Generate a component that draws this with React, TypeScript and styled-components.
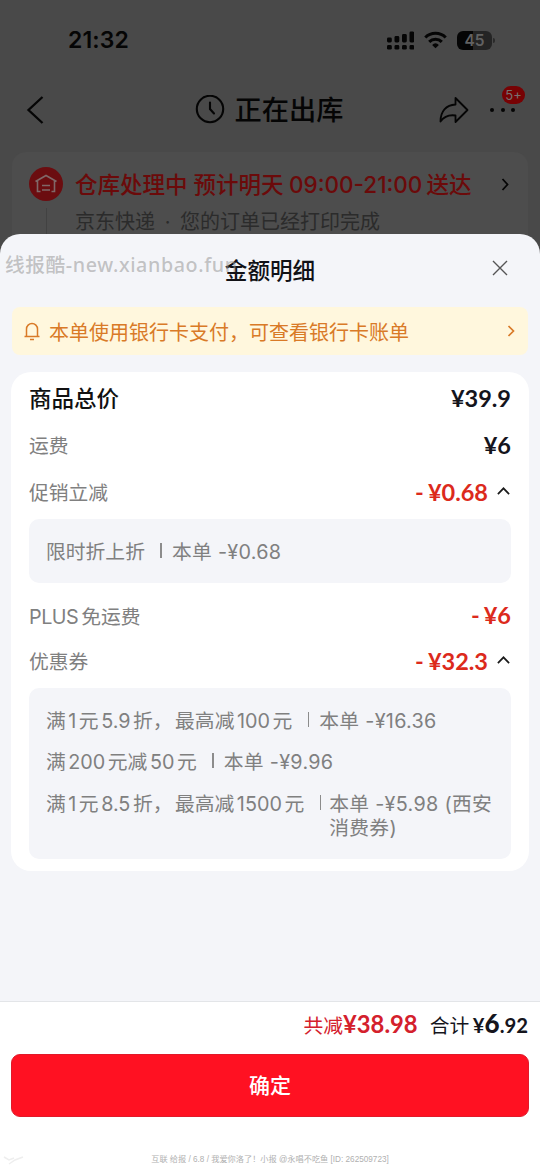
import React from 'react';
import styled, { createGlobalStyle } from 'styled-components';

const Global = createGlobalStyle`
  * { box-sizing: border-box; }
  body { margin: 0; background: #494949; }
`;

const sans = `Inter, "Noto Sans CJK SC", sans-serif`;
const price = `Lato, "Noto Sans CJK SC", sans-serif`;

const Screen = styled.div`
  width: 540px;
  height: 1170px;
  display: flex;
  flex-direction: column;
  overflow: hidden;
  background: #494949;
  color: #050505;
  font-family: ${sans};
  white-space: nowrap;
`;

const StatusBar = styled.header`
  height: 80px;
  flex: none;
  display: flex;
  align-items: center;
  justify-content: space-between;
  padding: 0 45px 0 68px;
`;

const Clock = styled.span`
  font-size: 23px;
  font-weight: 600;
  letter-spacing: 0.1px;
`;

const StatusIcons = styled.div`
  display: flex;
  align-items: center;
  gap: 10px;
`;

const Battery = styled.div`
  width: 35px;
  height: 19px;
  border-radius: 6px;
  background: linear-gradient(90deg, #050505 47%, #242424 47%);
  color: #626262;
  font-size: 15.5px;
  font-weight: 600;
  line-height: 19px;
  text-align: center;
`;

const BatteryGroup = styled.div`
  display: flex;
  align-items: center;
  gap: 1px;
  &::after {
    content: '';
    width: 2px;
    height: 5px;
    border-radius: 0 2px 2px 0;
    background: #2a2a2a;
  }
`;

const NavBar = styled.nav`
  height: 72px;
  flex: none;
  display: grid;
  grid-template-columns: 140px 1fr 140px;
  align-items: center;
  padding: 0 23px 13px 26px;
`;

const NavTitle = styled.h1`
  margin: 0;
  padding-right: 5px;
  display: flex;
  align-items: center;
  justify-content: center;
  gap: 10px;
  font-size: 27.2px;
  line-height: 36px;
  font-weight: 500;
`;

const NavName = styled.span`
  padding-top: 2px;
`;

const NavActions = styled.div`
  display: flex;
  align-items: center;
  justify-content: flex-end;
  gap: 21px;
`;

const More = styled.div`
  position: relative;
  display: flex;
  gap: 6.5px;
  padding-right: 2px;
`;

const Dot = styled.i`
  width: 4px;
  height: 4px;
  border-radius: 50%;
  background: #050505;
`;

const Badge = styled.span`
  position: absolute;
  right: -8px;
  top: -22px;
  width: 23px;
  height: 18px;
  border-radius: 9px;
  background: #770204;
  color: #777070;
  font-size: 13px;
  line-height: 18px;
  text-align: center;
`;

const OrderCard = styled.section`
  flex: none;
  height: 114px;
  margin: 0 12px;
  border-radius: 14px;
  background: #4d4d4d;
  display: flex;
  padding: 15px 19px 0 17px;
`;

const Timeline = styled.div`
  width: 34px;
  display: flex;
  flex-direction: column;
  align-items: center;
  gap: 7px;
  &::after {
    content: '';
    width: 1px;
    height: 50px;
    background: #424242;
  }
`;

const OrderText = styled.div`
  flex: 1;
  margin-left: 12px;
`;

const OrderHeadline = styled.div`
  height: 37px;
  line-height: 35px;
  font-size: 22.5px;
  font-weight: 500;
  color: #6b0a0a;
`;

const TimeRange = styled.span`
  margin: 0 4px 0 5.5px;
`;

const OrderSub = styled.div`
  height: 36px;
  line-height: 36px;
  font-size: 20px;
  color: #2b2b2b;
`;

const Separator = styled.span`
  margin: 0 4px;
`;

const Sheet = styled.main`
  position: relative;
  flex: 1;
  margin-top: -32px;
  border-radius: 20px 20px 0 0;
  background: #f4f5f9;
  display: flex;
  flex-direction: column;
`;

const SheetHead = styled.div`
  height: 73px;
  display: grid;
  grid-template-columns: 60px 1fr 60px;
  align-items: center;
  justify-items: center;
`;

const SheetTitle = styled.h2`
  grid-column: 2;
  margin: 0;
  padding-top: 1px;
  font-size: 22.6px;
  line-height: 30px;
  font-weight: 500;
  color: #111116;
`;

const CloseButton = styled.button`
  border: 0;
  padding: 0 20px 5px 0;
  background: none;
  display: flex;
`;

const SiteMark = styled.span`
  position: absolute;
  left: 5px;
  top: 17px;
  font: 500 19.7px/28px "Noto Sans", "Noto Sans CJK SC", sans-serif;
  letter-spacing: 0.6px;
  color: rgba(150, 150, 150, 0.55);
`;

const Notice = styled.div`
  height: 48px;
  margin: 0 12px;
  padding: 0 13px 0 12px;
  border-radius: 8px;
  background: #fff7dd;
  color: #d97a27;
  display: flex;
  align-items: center;
  font-size: 20px;
`;

const NoticeText = styled.span`
  flex: 1;
  margin-left: 9px;
`;

const Bill = styled.section`
  margin: 17px 11px 0;
  padding: 2px 18px 12px;
  border-radius: 20px;
  background: #fff;
`;

const BillRow = styled.div<{ $h?: number; $top?: number }>`
  height: ${(p) => p.$h ?? 47}px;
  margin-top: ${(p) => p.$top ?? 0}px;
  display: flex;
  align-items: center;
`;

const Label = styled.span<{ $strong?: boolean }>`
  flex: 1;
  padding-bottom: ${(p) => (p.$strong ? 2 : 0)}px;
  font-size: ${(p) => (p.$strong ? 22.5 : 19.8)}px;
  font-weight: ${(p) => (p.$strong ? 500 : 400)};
  color: ${(p) => (p.$strong ? '#111' : '#808080')};
`;

const Brand = styled.span`
  margin-right: 3px;
  letter-spacing: -0.5px;
`;

const Amount = styled.span<{ $off?: boolean }>`
  font-family: ${price};
  font-size: 23.5px;
  font-weight: 700;
  color: ${(p) => (p.$off ? '#dc2a1c' : '#14141c')};
`;

const Minus = styled.span`
  margin-right: 4px;
`;

const Caret = styled.svg`
  margin: 0 1px 2px 9px;
`;

const Panel = styled.div<{ $top?: number }>`
  margin-top: ${(p) => p.$top ?? 4}px;
  padding: 20.5px 17px 19.5px;
  border-radius: 10px;
  background: #f4f5f9;
  display: flex;
  flex-direction: column;
  gap: 17.5px;
`;

const Detail = styled.div`
  display: flex;
  font-size: 19.8px;
  line-height: 24px;
  color: #808080;
`;

const Bar = styled.i<{ $gap: number }>`
  flex: none;
  width: 1.5px;
  height: 15px;
  margin: 3px ${(p) => p.$gap}px 0 15.5px;
  background: #8c8c8c;
`;

const DetailValue = styled.span`
  white-space: pre-line;
  letter-spacing: 0.3px;
`;

const Num = styled.span`
  margin: 0 2.5px;
`;

const Comma = styled.span`
  margin-right: 2.5px;
`;

const Footer = styled.footer`
  height: 169px;
  margin-top: auto;
  border-top: 1px solid #e3e5e8;
  background: #fff;
  display: flex;
  flex-direction: column;
`;

const Totals = styled.div`
  height: 52px;
  padding: 1px 12px 0;
  display: flex;
  align-items: baseline;
  justify-content: flex-end;
  font-size: 19.8px;
  line-height: 46px;
`;

const Saved = styled.div`
  margin-right: 12px;
  color: #d4202c;
`;

const Payable = styled.div`
  color: #15151d;
`;

const Figure = styled.span<{ $size: number; $weight?: number }>`
  font-family: ${price};
  font-size: ${(p) => p.$size}px;
  font-weight: ${(p) => p.$weight ?? 700};
  line-height: 28px;
`;

const Confirm = styled.button`
  flex: none;
  height: 63px;
  margin: 0 11px;
  padding: 1px 0 0;
  border: 1px solid #e01a2a;
  border-radius: 9px;
  background: #ff1122;
  color: #fff;
  font: 500 21px/30px ${sans};
`;

const Credit = styled.div`
  display: grid;
  grid-template-columns: 30px 1fr 30px;
  align-items: center;
  margin-top: 36px;
  height: 14px;
  font: 8.2px/14px "Liberation Sans", "Noto Sans CJK SC", sans-serif;
  color: #b0b0b0;
  text-align: center;
`;

/* Sets digits and the full-width comma slightly apart from the Chinese text around them. */
function Mixed({ text }: { text: string }) {
  return (
    <span>
      {text.split(/([0-9.]+|，)/).map((part, i) => {
        if (part === '，') return <Comma key={i}>{part}</Comma>;
        return i % 2 ? <Num key={i}>{part}</Num> : part;
      })}
    </span>
  );
}

function Signal() {
  return (
    <svg width="27.500" height="19" viewBox="0 0 27.500 19" fill="#050505">
      {[0, 1, 2, 3].map((i) => (
        <React.Fragment key={i}>
          <rect x={i * 7.5} y={[6.5, 5, 3, 0.5][i]} width="4.8" height={[5, 6.5, 8.5, 11][i]} rx="1.4" />
          <rect x={i * 7.5} y="14" width="4.8" height="4.6" rx="1.4" />
        </React.Fragment>
      ))}
    </svg>
  );
}

function Wifi() {
  return (
    <svg width="23" height="18" viewBox="0 0 23 18" fill="none" stroke="#050505" strokeWidth="3.1">
      <path d="M1.3 6.5a14.5 14.5 0 0 1 20.4 0" />
      <path d="M5.2 10.8a9 9 0 0 1 12.6 0" />
      <path d="M11.5 17.3 8.1 13.9a5 5 0 0 1 6.8 0z" fill="#050505" stroke="none" />
    </svg>
  );
}

function Up() {
  return (
    <Caret width="13" height="8" viewBox="0 0 13 8" fill="none" stroke="#1a1a1a" strokeWidth="1.7">
      <path d="M.9 7.2 6.5 1.3l5.6 5.9" />
    </Caret>
  );
}

function Off({ value }: { value: string }) {
  return (
    <Amount $off>
      <Minus>-</Minus>¥{value}
    </Amount>
  );
}

export default function App() {
  return (
    <Screen>
      <Global />
      <StatusBar>
        <Clock>21:32</Clock>
        <StatusIcons>
          <Signal />
          <Wifi />
          <BatteryGroup>
            <Battery>45</Battery>
          </BatteryGroup>
        </StatusIcons>
      </StatusBar>
      <NavBar>
        <svg width="18" height="28" viewBox="0 0 18 28" fill="none" stroke="#050505" strokeWidth="2.3">
          <path d="M16.5 1 2.5 14l14 13" />
        </svg>
        <NavTitle>
          <svg width="30" height="30" viewBox="0 0 30 30" fill="none" stroke="#050505" strokeWidth="2.1">
            <circle cx="15" cy="14" r="13.200" />
            <path d="M15 7.500V14l4 4.500" strokeLinecap="round" />
          </svg>
          <NavName>正在出库</NavName>
        </NavTitle>
        <NavActions>
          <svg width="30" height="28" viewBox="0 0 30 28" fill="none" stroke="#050505" strokeWidth="1.800" strokeLinejoin="round">
            <path d="M16.500 2 28.500 14 16.500 26V19.500C9.500 18.500 5 20.500 1.500 25.500 1.500 15.500 7 9 16.500 8.500Z" />
          </svg>
          <More>
            <Dot />
            <Dot />
            <Dot />
            <Badge>5+</Badge>
          </More>
        </NavActions>
      </NavBar>
      <OrderCard>
        <Timeline>
          <svg width="34" height="34" viewBox="0 0 34 34" fill="none" stroke="#806868" strokeWidth="1.6">
            <circle cx="17" cy="17" r="17" fill="#6b0d10" stroke="none" />
            <path d="M6.500 14.500 17 8.500l10.500 6M8.500 13.500v11h3M25.500 13.500v11h-3M13 18.500h8M13 23h8" />
          </svg>
        </Timeline>
        <OrderText>
          <OrderHeadline>
            仓库处理中 预计明天<TimeRange>09:00-21:00</TimeRange>送达
          </OrderHeadline>
          <OrderSub>
            京东快递<Separator> · </Separator>您的订单已经打印完成
          </OrderSub>
        </OrderText>
        <svg width="8" height="35" viewBox="0 0 8 35" fill="none" stroke="#050505" strokeWidth="1.8">
          <path d="m1.500 12 5 5.500-5 5.500" />
        </svg>
      </OrderCard>
      <Sheet>
        <SiteMark>线报酷-new.xianbao.fun</SiteMark>
        <SheetHead>
          <SheetTitle>金额明细</SheetTitle>
          <CloseButton aria-label="关闭">
            <svg width="16" height="16" viewBox="0 0 16 16" fill="none" stroke="#555" strokeWidth="1.4">
              <path d="m1 1 14 14M15 1 1 15" />
            </svg>
          </CloseButton>
        </SheetHead>
        <Notice>
          <svg width="16" height="20" viewBox="0 0 16 20" fill="none" stroke="currentColor" strokeWidth="1.5">
            <path d="M.5 15.500h15M2.500 15.500V8a5.500 5.500 0 0 1 11 0v7.500M6 18.500h4" />
          </svg>
          <NoticeText>本单使用银行卡支付，可查看银行卡账单</NoticeText>
          <svg width="8" height="12" viewBox="0 0 8 12" fill="none" stroke="currentColor" strokeWidth="1.7">
            <path d="m1.500 1 5 5-5 5" />
          </svg>
        </Notice>
        <Bill>
          <BillRow>
            <Label $strong>商品总价</Label>
            <Amount>¥39.9</Amount>
          </BillRow>
          <BillRow>
            <Label>运费</Label>
            <Amount>¥6</Amount>
          </BillRow>
          <BillRow>
            <Label>促销立减</Label>
            <Off value="0.68" />
            <Up />
          </BillRow>
          <Panel>
            <Detail>
              限时折上折
              <Bar $gap={10} />
              <DetailValue>本单 -¥0.68</DetailValue>
            </Detail>
          </Panel>
          <BillRow $h={46} $top={9}>
            <Label>
              <Brand>PLUS</Brand>免运费
            </Label>
            <Off value="6" />
          </BillRow>
          <BillRow $h={45}>
            <Label>优惠券</Label>
            <Off value="32.3" />
            <Up />
          </BillRow>
          <Panel $top={5}>
            <Detail>
              <Mixed text="满1元5.9折，最高减100元" />
              <Bar $gap={10} />
              <DetailValue>本单 -¥16.36</DetailValue>
            </Detail>
            <Detail>
              <Mixed text="满200元减50元" />
              <Bar $gap={10} />
              <DetailValue>本单 -¥9.96</DetailValue>
            </Detail>
            <Detail>
              <Mixed text="满1元8.5折，最高减1500元" />
              <Bar $gap={8} />
              <DetailValue>{'本单 -¥5.98 (西安\n消费券)'}</DetailValue>
            </Detail>
          </Panel>
        </Bill>
        <Footer>
          <Totals>
            <Saved>
              共减<Figure $size={23.8}>¥38.98</Figure>
            </Saved>
            <Payable>
              合计&thinsp;
              <Figure $size={20.3}>¥</Figure>
              <Figure $size={26} $weight={900}>6</Figure>
              <Figure $size={20.3}>.92</Figure>
            </Payable>
          </Totals>
          <Confirm>确定</Confirm>
          <Credit>
            <svg width="30" height="14" viewBox="0 0 30 14" fill="none" stroke="#eee" strokeWidth="1.5">
              <path d="m4 4 5 3 5-2M9 11l6-4 8-3" />
            </svg>
            <span>互联 给报 / 6.8 / 我爱你洛了！小报 @永唱不吃鱼 [ID: 262509723]</span>
          </Credit>
        </Footer>
      </Sheet>
    </Screen>
  );
}
